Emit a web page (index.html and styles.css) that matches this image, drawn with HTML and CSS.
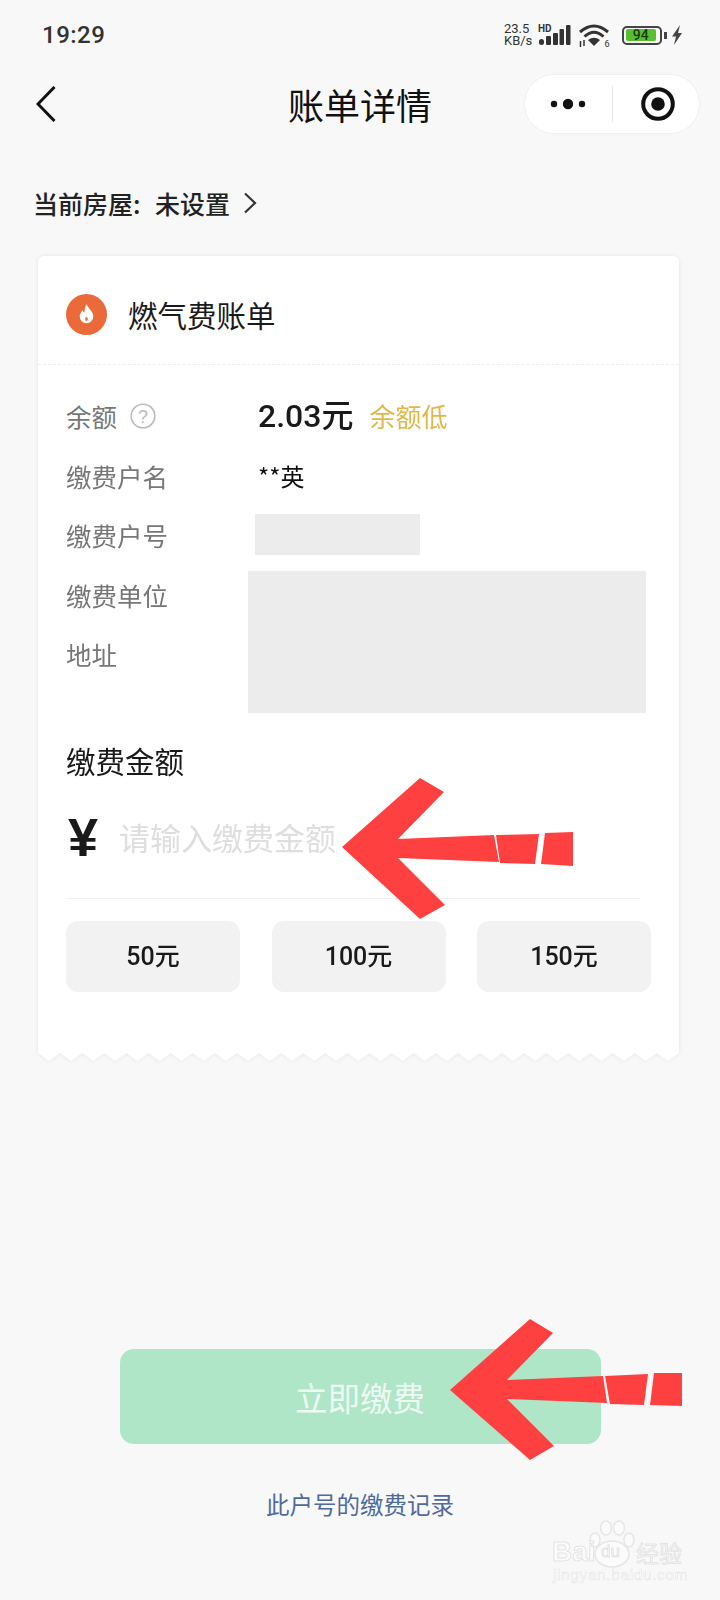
FILE: index.html
```html
<!doctype html>
<html>

<head>
	<meta charset="utf-8" />
	<meta name="viewport" content="width=device-width, user-scalable=no" />
	<title>账单详情</title>
	<link rel="stylesheet" href="styles.css">
</head>

<body>
	<div id="app">

		<!-- status bar -->
		<div class="statusbar">
			<span class="time">19:29</span>
			<div class="status-icons">
				<div class="speed"><span>23.5</span><span>KB/s</span></div>
				<div class="signal">
					<span class="hd">HD</span>
					<svg width="33" height="20" viewBox="0 0 33 20">
						<rect x="1" y="14" width="5" height="6" rx="2.500" fill="#333"/>
						<rect x="8" y="11" width="5" height="9" rx="1" fill="#333"/>
						<rect x="15" y="8" width="5" height="12" rx="1" fill="#333"/>
						<rect x="21.500" y="4" width="4.500" height="16" rx="1" fill="#333"/>
						<rect x="28" y="0" width="4.500" height="20" rx="1" fill="#333"/>
					</svg>
				</div>
				<svg class="wifi" width="33" height="24" viewBox="0 0 33 24">
					<path d="M2 9Q16 -3 30 9" fill="none" stroke="#333" stroke-width="3"/>
					<path d="M6.500 13.500Q16 5 25.500 13.500" fill="none" stroke="#333" stroke-width="3"/>
					<path d="M16 23L10 17Q16 12.500 22 17z" fill="#333"/>
					<path d="M2.500 18v6M6 17v6" stroke="#333" stroke-width="1.500"/>
					<text x="26.500" y="23.500" class="wifi-num">6</text>
				</svg>
				<div class="battery"><span class="battery-fill">94</span></div>
				<span class="battery-nub"></span>
				<svg width="12" height="20" viewBox="0 0 12 20"><path d="M9 0L1 11.500h4L3 20l8-12H7z" fill="#444"/></svg>
			</div>
		</div>

		<!-- nav -->
		<div class="nav">
			<svg class="back" width="20" height="36" viewBox="0 0 20 36"><path d="M18.500 1L2 18l16.500 17" fill="none" stroke="#111" stroke-width="3"/></svg>
			<div class="nav-title">账单详情</div>
			<div class="capsule">
				<svg width="36" height="12" viewBox="0 0 36 12">
					<circle cx="4" cy="6" r="3.200" fill="#111"/>
					<circle cx="18" cy="6" r="5.200" fill="#111"/>
					<circle cx="32" cy="6" r="3.200" fill="#111"/>
				</svg>
				<span class="capsule-line"></span>
				<svg width="34" height="34" viewBox="0 0 34 34">
					<circle cx="17" cy="17" r="14.800" fill="none" stroke="#111" stroke-width="4"/>
					<circle cx="17" cy="17" r="6.800" fill="#111"/>
				</svg>
			</div>
		</div>

		<div class="house">
			<span>当前房屋: 未设置</span>
			<svg width="14" height="22" viewBox="0 0 14 22"><path d="M2 1.500L12 11 2 20.500" fill="none" stroke="#333" stroke-width="2.200"/></svg>
		</div>

		<!-- bill card -->
		<div class="card">
			<div class="card-body">
				<div class="card-head">
					<svg width="41" height="41" viewBox="0 0 41 41">
						<circle cx="20.500" cy="20.500" r="20.500" fill="#eb6a39"/>
						<path d="M20.500 10c1 4 6.800 7 6.800 12.500a6.800 6.800 0 0 1-13.600 0c0-3 1.700-4.600 2.900-6.300.4 1.300 1 2 1.800 2.500.2-3.400.8-6 2.100-8.700z" fill="#fff"/>
						<ellipse cx="20.500" cy="25" rx="1.300" ry="2" fill="#eb6a39"/>
					</svg>
					<span class="card-title">燃气费账单</span>
				</div>

				<div class="info">
					<div class="label">余额
						<svg class="help" width="26" height="26" viewBox="0 0 26 26">
							<circle cx="13" cy="13" r="11.800" fill="none" stroke="#bbb" stroke-width="1.600"/>
							<text x="13" y="19.500" class="help-mark">?</text>
						</svg>
					</div>
					<div class="value"><span class="balance">2.03元</span><span class="low">余额低</span></div>
					<div class="label">缴费户名</div>
					<div class="value name">**英</div>
					<div class="label">缴费户号</div>
					<div class="value"><div class="mask-small"></div></div>
					<div class="label">缴费单位</div>
					<div class="mask-big"></div>
					<div class="label">地址</div>
				</div>

				<div class="pay-title">缴费金额</div>
				<div class="pay-input">
					<span class="yen">¥</span>
					<span class="placeholder">请输入缴费金额</span>
				</div>
				<div class="amounts">
					<div class="amount">50元</div>
					<div class="amount">100元</div>
					<div class="amount">150元</div>
				</div>
			</div>
			<svg class="zigzag" width="641" height="10" viewBox="0 0 641 10">
				<defs>
					<pattern id="zig" width="22.100" height="10" patternUnits="userSpaceOnUse">
						<path d="M0 0H22.100V2L11 10 0 2z" fill="#fff"/>
					</pattern>
				</defs>
				<rect width="641" height="10" fill="url(#zig)"/>
			</svg>
		</div>

		<div class="paybtn">立即缴费</div>
		<div class="records">此户号的缴费记录</div>

		<!-- red arrows drawn over the shot -->
		<svg class="arrows" width="720" height="1600" viewBox="0 0 720 1600">
			<g fill="#ff4040">
				<polygon points="342,847 420,778 444,792 398,839 494,835 499,862 398,858 445,905 420,919"/>
				<polygon points="496,835 539,834 535,864 500,863"/>
				<polygon points="545,833 573,832 573,866 541,864"/>
				<polygon points="450,1390 530,1319 553,1333 507,1380 603,1376 607,1403 507,1399 554,1446 530,1460"/>
				<polygon points="605,1376 648,1374 644,1405 610,1404"/>
				<polygon points="654,1373 682,1373 682,1406 650,1405"/>
			</g>
		</svg>

		<!-- watermark -->
		<div class="watermark">
			<svg class="paw" width="48" height="50" viewBox="0 0 48 50">
				<g fill="#fbfbfb" stroke="#e6e6e6" stroke-width="1.500">
					<ellipse cx="7" cy="20" rx="5" ry="7"/>
					<ellipse cx="18" cy="8" rx="5.500" ry="7"/>
					<ellipse cx="31" cy="8" rx="5.500" ry="7"/>
					<ellipse cx="41" cy="20" rx="5" ry="7"/>
					<ellipse cx="24" cy="34" rx="17" ry="13"/>
				</g>
			</svg>
			<span class="wm-bai">Bai</span>
			<span class="wm-du">du</span>
			<span class="wm-jy">经验</span>
			<span class="wm-url">jingyan.baidu.com</span>
		</div>

	</div>
</body>

</html>
```

FILE: styles.css
```css
* {
	margin: 0;
	padding: 0;
	box-sizing: border-box;
}

body {
	background: #f8f8f8;
	font-family: "Noto Sans CJK SC", "Noto Sans", sans-serif;
	color: #1a1a1a;
}

#app {
	position: relative;
	width: 720px;
	height: 1600px;
	overflow: hidden;
	display: flex;
	flex-direction: column;
}

/* status bar start */
.statusbar {
	height: 74px;
	padding: 0 37px 4px 42px;
	display: flex;
	align-items: center;
	justify-content: space-between;
}

.time {
	font-family: Roboto, sans-serif;
	font-size: 24px;
	font-weight: 500;
	letter-spacing: 0.5px;
	color: #333;
}

.status-icons {
	display: flex;
	align-items: center;
}

.speed {
	display: flex;
	flex-direction: column;
	font-family: Roboto, sans-serif;
	font-size: 13px;
	line-height: 12.500px;
	color: #333;
	width: 34px;
	text-align: left;
}

.signal {
	position: relative;
	display: flex;
}

.hd {
	position: absolute;
	left: 0;
	top: -1px;
	font-family: Roboto, sans-serif;
	font-size: 10px;
	line-height: 10px;
	font-weight: 700;
	color: #333;
}

.wifi {
	margin-left: 7px;
}

.wifi-num {
	font-family: Roboto, sans-serif;
	font-size: 9px;
	fill: #333;
}

.battery {
	margin-left: 11px;
	width: 40px;
	height: 19px;
	border: 2px solid #444;
	border-radius: 5px;
	padding: 1.5px;
	display: flex;
}

.battery-fill {
	width: 92%;
	background: #58bf2f;
	border-radius: 2px;
	font-family: Roboto, sans-serif;
	font-size: 14px;
	line-height: 12px;
	font-weight: 500;
	text-align: center;
	color: #1c3a10;
}

.battery-nub {
	margin: 0 4px 0 2px;
	width: 3px;
	height: 7px;
	background: #444;
}
/* status bar end */

/* nav start */
.nav {
	height: 60px;
	padding: 0 20px;
	display: grid;
	grid-template-columns: minmax(0, 1fr) auto minmax(0, 1fr);
	align-items: center;
}

.back {
	margin-left: 16px;
}

.nav-title {
	font-size: 36px;
	line-height: 60px;
	color: #111;
}

.capsule {
	justify-self: end;
	width: 176px;
	height: 60px;
	background: #fff;
	border: 1px solid #f1f1f1;
	border-radius: 30px;
	display: flex;
	align-items: center;
	padding-left: 25px;
}

.capsule-line {
	width: 1px;
	height: 36px;
	background: #e8e8e8;
	margin: 0 28px 0 26px;
}
/* nav end */

.house {
	margin: 52px 0 36px 33px;
	height: 34px;
	display: flex;
	align-items: center;
	gap: 13px;
	font-size: 25px;
	line-height: 34px;
	font-weight: 500;
	word-spacing: 9px;
	color: #222;
}

/* card start */
.card {
	margin-left: 38px;
	width: 641px;
	filter: drop-shadow(0 0 2px rgba(0, 0, 0, 0.08));
}

.card-body {
	background: #fff;
	border-radius: 6px 6px 0 0;
	padding-bottom: 60px;
}

.zigzag {
	display: block;
	margin-top: -1px;
}

.card-head {
	height: 109px;
	padding: 8px 0 0 28px;
	display: flex;
	align-items: center;
	gap: 21px;
	border-bottom: 1px dashed #eee;
}

.card-title {
	font-size: 29.500px;
	color: #1a1a1a;
}

.info {
	margin-top: 21px;
	padding-left: 28px;
	display: grid;
	grid-template-columns: 182px 1fr;
	grid-auto-rows: 59.5px;
	align-items: center;
}

.label {
	display: flex;
	align-items: center;
	font-size: 25.500px;
	color: #777;
}

.help {
	margin-left: 13px;
}

.help-mark {
	font-family: "Liberation Sans", sans-serif;
	font-size: 18px;
	text-anchor: middle;
	fill: #bbb;
}

.value {
	padding-left: 10px;
	display: flex;
	align-items: center;
}

.balance {
	margin-bottom: 5px;
	font-family: Roboto, "Noto Sans CJK SC", sans-serif;
	font-size: 32px;
	font-weight: 500;
}

.low {
	margin-left: 16px;
	font-size: 26px;
	color: #e0b84a;
}

.name {
	font-size: 24px;
	color: #111;
}

.mask-small {
	margin-left: -3px;
	width: 165px;
	height: 41px;
	background: #ececec;
}

.mask-big {
	grid-row: span 2;
	align-self: start;
	margin-top: 6px;
	width: 398px;
	height: 142px;
	background: #ececec;
}

.pay-title {
	margin: 56px 0 27px 28px;
	font-size: 29.500px;
	line-height: 40px;
}

.pay-input {
	margin: 0 39px 0 28px;
	padding-bottom: 31px;
	height: 92px;
	display: flex;
	align-items: center;
	border-bottom: 1px solid #f0f0f0;
}

.yen {
	width: 53px;
	padding-left: 2px;
	font-family: "Liberation Sans", sans-serif;
	font-size: 54px;
	font-weight: 700;
	color: #1a1a1a;
}

.placeholder {
	font-size: 31px;
	color: #dedede;
}

.amounts {
	margin: 22px 28px 0;
	display: grid;
	grid-template-columns: repeat(3, 174px);
	justify-content: space-between;
}

.amount {
	height: 71px;
	background: #f2f2f2;
	border-radius: 12px;
	font-family: Roboto, "Noto Sans CJK SC", sans-serif;
	font-size: 25px;
	line-height: 71px;
	font-weight: 500;
	text-align: center;
}
/* card end */

.paybtn {
	margin: 288px auto 0;
	width: 481px;
	height: 95px;
	background: #afe6c8;
	border-radius: 14px;
	font-size: 32.500px;
	line-height: 95px;
	text-align: center;
	color: rgba(255, 255, 255, 0.8);
}

.records {
	margin-top: 42px;
	font-size: 23.500px;
	line-height: 36px;
	text-align: center;
	color: #4f6b9b;
}

.arrows {
	position: absolute;
	left: 0;
	top: 0;
}

/* watermark start */
.watermark {
	position: absolute;
	left: 550px;
	top: 1520px;
	width: 140px;
	height: 70px;
	font-family: "Liberation Sans", sans-serif;
	color: #fbfbfb;
	-webkit-text-stroke: 1px #e4e4e4;
}

.watermark span {
	position: absolute;
}

.paw {
	position: absolute;
	left: 38px;
	top: 0;
}

.wm-bai {
	left: 2px;
	top: 16px;
	font-size: 28px;
	font-weight: 700;
	line-height: 32px;
}

.wm-du {
	left: 51px;
	top: 22px;
	font-size: 17px;
	line-height: 20px;
}

.wm-jy {
	left: 86px;
	top: 18px;
	font-family: "Noto Sans CJK SC", sans-serif;
	font-size: 23px;
	line-height: 28px;
}

.wm-url {
	left: 3px;
	top: 46px;
	font-size: 15.500px;
	line-height: 18px;
	letter-spacing: 0.600px;
	-webkit-text-stroke: 0.500px #e4e4e4;
}
/* watermark end */
```
